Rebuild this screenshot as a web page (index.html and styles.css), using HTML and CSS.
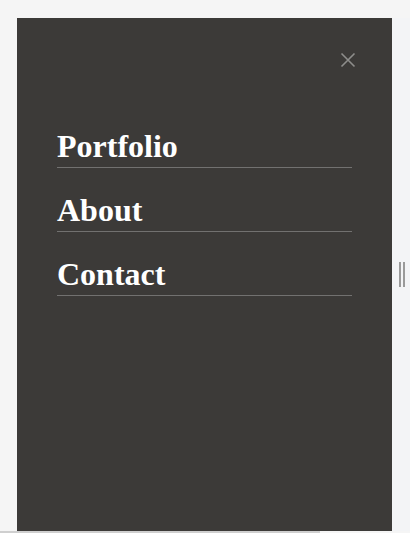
FILE: index.html
```html
<!DOCTYPE html>
<html lang="en">
<head>
<meta charset="utf-8">
<title>Menu</title>
<link rel="stylesheet" href="styles.css">
</head>
<body>
<div class="page">
  <aside class="panel">
    <div class="close-row">
      <button class="close" aria-label="Close">
        <svg width="16" height="16" viewBox="0 0 16 16"><path d="M1.5 1.5 L14.5 14.5 M14.5 1.5 L1.5 14.5" stroke="#8e8d8b" stroke-width="1.6" fill="none"/></svg>
      </button>
    </div>
    <nav class="menu">
      <a class="item" href="#">Portfolio</a>
      <a class="item" href="#">About</a>
      <a class="item" href="#">Contact</a>
    </nav>
  </aside>
  <div class="side">
    <div class="grip"><span></span><span></span></div>
  </div>
</div>
<div class="hbar"></div>
</body>
</html>
```

FILE: styles.css
```css
html, body {
  margin: 0;
  padding: 0;
  height: 100%;
  overflow: hidden;
}
body {
  background: #f5f5f5;
  font-family: "Liberation Serif", "Times New Roman", serif;
  width: 410px;
  height: 533px;
  position: relative;
}
.page {
  display: flex;
  padding: 18px 0 0 17px;
  height: 515px;
}
.panel {
  width: 375px;
  height: 513px;
  background: #3c3a38;
  box-sizing: border-box;
  padding: 34px 40px 0 40px;
  display: flex;
  flex-direction: column;
}
.close-row {
  display: flex;
  justify-content: flex-end;
  margin-right: -4px;
  height: 16px;
}
.close {
  border: 0;
  background: none;
  padding: 0;
  width: 16px;
  height: 16px;
  display: block;
}
.close svg { display: block; }
.menu {
  margin-top: 36px;
  display: flex;
  flex-direction: column;
}
.item {
  display: block;
  color: #ffffff;
  text-decoration: none;
  font-weight: bold;
  font-size: 32px;
  line-height: 40px;
  padding-top: 22px;
  padding-bottom: 1px;
  border-bottom: 1px solid #727170;
}
.side {
  flex: 1;
  background: #f3f4f6;
  display: flex;
  align-items: center;
  justify-content: center;
  height: 513px;
}
.grip {
  display: flex;
  gap: 2px;
  margin-left: 1px;
}
.grip span {
  width: 2px;
  height: 25px;
  background: #b9b9b9;
  border: 0.5px solid #9a9a9a;
  box-sizing: border-box;
}
.hbar {
  position: absolute;
  left: 0;
  bottom: 0;
  width: 320px;
  height: 2px;
  background: #cfcfcf;
}
```
